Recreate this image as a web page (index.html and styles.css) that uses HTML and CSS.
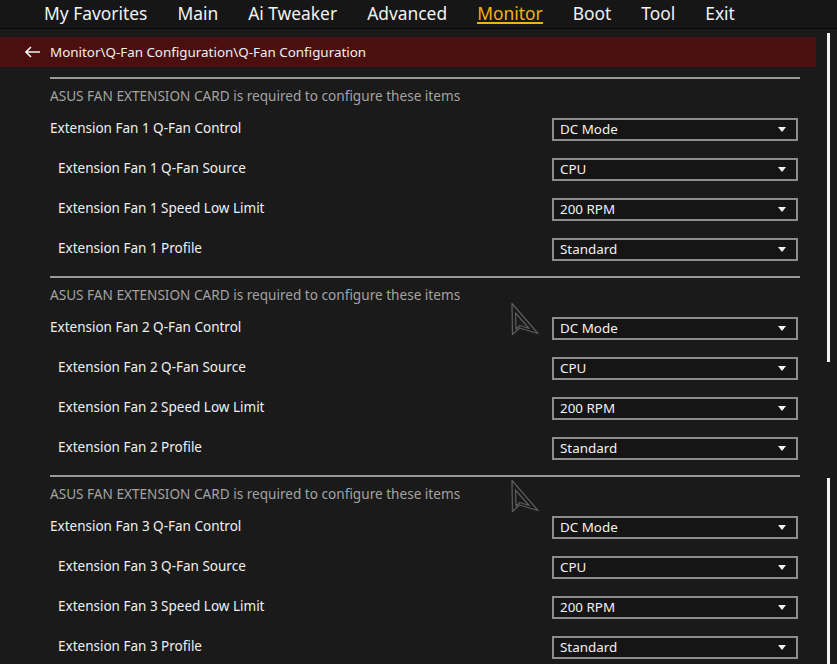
FILE: index.html
```html
<!DOCTYPE html>
<html>
<head>
<meta charset="utf-8">
<link rel="stylesheet" href="styles.css">
</head>
<body>
<nav class="topnav">
  <span class="tab">My Favorites</span>
  <span class="tab">Main</span>
  <span class="tab">Ai Tweaker</span>
  <span class="tab">Advanced</span>
  <span class="tab active">Monitor</span>
  <span class="tab">Boot</span>
  <span class="tab">Tool</span>
  <span class="tab">Exit</span>
</nav>
<div class="body">
  <div class="main">
    <div class="crumb">
      <svg class="back" width="16" height="12" viewBox="0 0 16 12"><path d="M1 6 H15 M6 1 L1 6 L6 11" fill="none" stroke="#f2f2f2" stroke-width="1.6"/></svg>
      <span>Monitor\Q-Fan Configuration\Q-Fan Configuration</span>
    </div>
    <div class="content">
      <section class="group">
        <div class="note">ASUS FAN EXTENSION CARD is required to configure these items</div>
        <div class="row"><span class="label">Extension Fan 1 Q-Fan Control</span><div class="select">DC Mode<i class="caret"></i></div></div>
        <div class="row sub"><span class="label">Extension Fan 1 Q-Fan Source</span><div class="select">CPU<i class="caret"></i></div></div>
        <div class="row sub"><span class="label">Extension Fan 1 Speed Low Limit</span><div class="select">200 RPM<i class="caret"></i></div></div>
        <div class="row sub"><span class="label">Extension Fan 1 Profile</span><div class="select">Standard<i class="caret"></i></div></div>
      </section>
      <section class="group">
        <div class="note">ASUS FAN EXTENSION CARD is required to configure these items</div>
        <div class="row"><span class="label">Extension Fan 2 Q-Fan Control</span><div class="select">DC Mode<i class="caret"></i></div></div>
        <div class="row sub"><span class="label">Extension Fan 2 Q-Fan Source</span><div class="select">CPU<i class="caret"></i></div></div>
        <div class="row sub"><span class="label">Extension Fan 2 Speed Low Limit</span><div class="select">200 RPM<i class="caret"></i></div></div>
        <div class="row sub"><span class="label">Extension Fan 2 Profile</span><div class="select">Standard<i class="caret"></i></div></div>
        <svg class="cursor c1" width="30" height="34" viewBox="0 0 30 34"><path d="M2 1.5 L2.5 32.5 L9.5 26 L28 31.5 Z M5.5 11 L6 27 L10 23.5 L19 26.5 Z" fill="none" stroke="#5a5a5a" stroke-width="1.3" stroke-linejoin="round"/></svg>
      </section>
      <section class="group">
        <div class="note">ASUS FAN EXTENSION CARD is required to configure these items</div>
        <div class="row"><span class="label">Extension Fan 3 Q-Fan Control</span><div class="select">DC Mode<i class="caret"></i></div></div>
        <div class="row sub"><span class="label">Extension Fan 3 Q-Fan Source</span><div class="select">CPU<i class="caret"></i></div></div>
        <div class="row sub"><span class="label">Extension Fan 3 Speed Low Limit</span><div class="select">200 RPM<i class="caret"></i></div></div>
        <div class="row sub"><span class="label">Extension Fan 3 Profile</span><div class="select">Standard<i class="caret"></i></div></div>
        <svg class="cursor c2" width="30" height="34" viewBox="0 0 30 34"><path d="M2 1.5 L2.5 32.5 L9.5 26 L28 31.5 Z M5.5 11 L6 27 L10 23.5 L19 26.5 Z" fill="none" stroke="#5a5a5a" stroke-width="1.3" stroke-linejoin="round"/></svg>
      </section>
    </div>
  </div>
  <div class="scroll">
    <div class="thumb t1"></div>
    <div class="thumb t2"></div>
  </div>
</div>
</body>
</html>
```

FILE: styles.css
```css
* { box-sizing: border-box; }
html, body { margin: 0; padding: 0; }
body {
  width: 837px;
  height: 664px;
  overflow: hidden;
  background: #1a1a1a;
  font-family: "Noto Sans", "Open Sans", sans-serif;
  color: #f0f0f0;
}
.topnav {
  height: 29px;
  background: #161616;
  border-bottom: 1px solid #050505;
  display: flex;
  align-items: flex-start;
  padding-left: 44px;
  gap: 30px;
}
.tab {
  font-size: 17.4px;
  line-height: 26px;
  color: #f2f2f2;
  position: relative;
  height: 26px;
}
.tab.active {
  color: #f2b40a;
}
.tab.active::after {
  content: "";
  position: absolute;
  left: 0;
  right: 0;
  top: 22px;
  height: 2px;
  background: #f2b40a;
}
.body {
  display: flex;
  padding-top: 4px;
}
.main {
  width: 816px;
  padding-top: 4px;
}
.crumb {
  height: 30px;
  background: #4b0f10;
  display: flex;
  align-items: center;
  padding-left: 25px;
  font-size: 13.4px;
  color: #f0f0f0;
}
.back { margin-right: 9px; }
.content {
  padding: 10px 16px 0 50px;
}
.group {
  position: relative;
  border-top: 2px solid #9a9a9a;
  padding-bottom: 7px;
}
.note {
  height: 30px;
  padding-top: 4px;
  line-height: 26px;
  font-size: 13.6px;
  color: #a3a3a3;
}
.row {
  height: 40px;
  display: flex;
  align-items: center;
  justify-content: space-between;
  font-size: 13.5px;
  color: #f0f0f0;
}
.row .label { margin-top: -3px; }
.row.sub .label { padding-left: 8px; }
.select {
  width: 246px;
  height: 23px;
  border: 2px solid #8d8d8d;
  background: #151515;
  display: flex;
  align-items: center;
  justify-content: space-between;
  padding: 0 10px 0 6px;
  font-size: 13.4px;
  color: #f2f2f2;
  margin-right: 2px;
}
.caret {
  width: 0;
  height: 0;
  border-left: 4.5px solid transparent;
  border-right: 4.5px solid transparent;
  border-top: 5px solid #f2f2f2;
}
.cursor { position: absolute; }
.cursor.c1 { left: 460px; top: 24px; }
.cursor.c2 { left: 460px; top: 2px; }
.scroll {
  margin-left: 11px;
  width: 3px;
  display: flex;
  flex-direction: column;
}
.thumb { background: #f4f4f4; width: 3px; }
.t1 { height: 329px; }
.t2 { margin-top: 116px; height: 200px; }
```
